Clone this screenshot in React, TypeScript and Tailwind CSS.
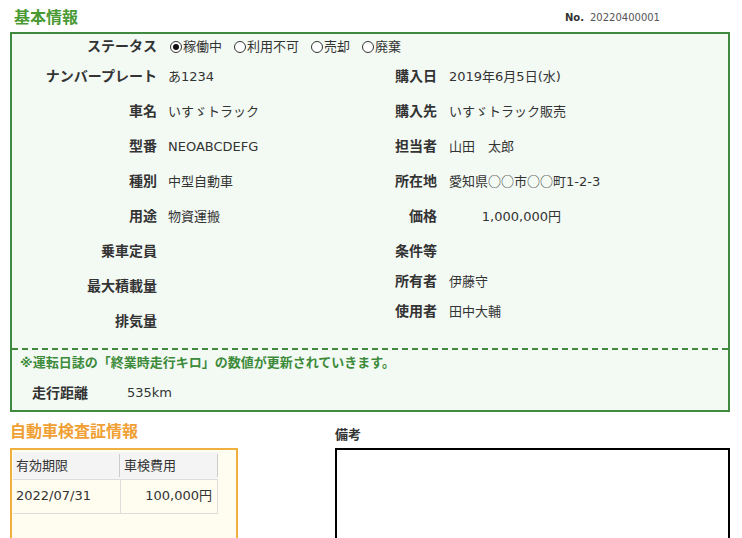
import React from "react";

function Radio({ checked, label }: { checked?: boolean; label: string }) {
  return (
    <span className="flex items-center mr-[12px]">
      <span className="w-[12px] h-[12px] rounded-full border border-[#333] bg-white flex items-center justify-center mr-[1px]">
        {checked && <span className="w-[6px] h-[6px] rounded-full bg-[#111]" />}
      </span>
      <span>{label}</span>
    </span>
  );
}

function LRow({ label, value, h = "h-[35px]" }: { label: string; value?: React.ReactNode; h?: string }) {
  return (
    <div className={`flex items-center ${h}`}>
      <div className="w-[145px] text-right font-bold text-[14px] text-[#333]">{label}</div>
      <div className="ml-[11px] text-[13px] text-[#333]">{value}</div>
    </div>
  );
}

function RRow({ label, value, h = "h-[35px]" }: { label: string; value?: React.ReactNode; h?: string }) {
  return (
    <div className={`flex items-center ${h}`}>
      <div className="w-[57px] text-right font-bold text-[14px] text-[#333]">{label}</div>
      <div className="ml-[12px] text-[13px] text-[#333]">{value}</div>
    </div>
  );
}

const cjk = "font-['Noto_Sans_CJK_JP',sans-serif]";

export default function App() {
  return (
    <div className="w-[742px] h-[538px] overflow-hidden bg-white font-['DejaVu_Sans','Noto_Sans_CJK_JP',sans-serif] text-[#333]">
      <div className="flex items-center h-[32px] px-[10px] pt-[3px]">
        <div className="ml-[4px] text-[16px] font-bold text-[#4a9a34]">基本情報</div>
        <div className="ml-auto mr-[72px] flex items-center text-[10px]">
          <span className="font-bold text-[#333]">No.</span>
          <span className="ml-[6px] text-[#555]">20220400001</span>
        </div>
      </div>

      <div className="ml-[10px] w-[720px] border-2 border-[#3f8a3f] bg-[#f3faf4]">
        <div className="flex items-center h-[25px]">
          <div className="w-[145px] text-right font-bold text-[14px]">ステータス</div>
          <div className="ml-[13px] flex items-center text-[13px]">
            <Radio checked label="稼働中" />
            <Radio label="利用不可" />
            <Radio label="売却" />
            <Radio label="廃棄" />
          </div>
        </div>
        <div className="flex pb-[9px]">
          <div className="w-[368px]">
            <LRow label="ナンバープレート" value="あ1234" />
            <LRow label="車名" value="いすゞトラック" />
            <LRow label="型番" value="NEOABCDEFG" />
            <LRow label="種別" value="中型自動車" />
            <LRow label="用途" value="物資運搬" />
            <LRow label="乗車定員" />
            <LRow label="最大積載量" />
            <LRow label="排気量" />
          </div>
          <div className="flex-1">
            <RRow label="購入日" value="2019年6月5日(水)" />
            <RRow label="購入先" value="いすゞトラック販売" />
            <RRow label="担当者" value="山田　太郎" />
            <RRow
              label="所在地"
              value={<span>愛知県<span className={cjk}>○○</span>市<span className={cjk}>○○</span>町1-2-3</span>}
            />
            <RRow label="価格" value={<span className="inline-block w-[112px] text-right">1,000,000円</span>} />
            <RRow label="条件等" />
            <RRow label="所有者" value="伊藤守" h="h-[25px]" />
            <RRow label="使用者" value="田中大輔" h="h-[35px]" />
          </div>
        </div>
        <div className="border-t-2 border-dashed border-[#3f8a3f]" />
        <div className="h-[26px] flex items-center pl-[8px] text-[13px] font-bold text-[#3d8b3a]">
          ※運転日誌の「終業時走行キロ」の数値が更新されていきます。
        </div>
        <div className="h-[34px] flex items-center pl-[20px]">
          <span className="font-bold text-[14px] w-[95px]">走行距離</span>
          <span className="text-[13px]">535km</span>
        </div>
      </div>

      <div className="flex px-[10px] mt-[8px]">
        <div className="w-[228px]">
          <div className="h-[24px] flex items-center text-[16px] font-bold text-[#f0a032]">自動車検査証情報</div>
          <div className="mt-[4px] h-[150px] border-2 border-[#f0b040] bg-[#fffcf0] pl-[1px] pt-[2px]">
            <table className="w-[205px] border-collapse text-[13px]">
              <tbody>
                <tr className="h-[27px] bg-[#f4f4f4]">
                  <td className="w-[107px] pl-[3px] border-b border-[#dddddd] relative">
                    有効期限
                    <span className="absolute right-0 top-[2px] bottom-[2px] w-px bg-[#cccccc]" />
                  </td>
                  <td className="pl-[4px] border-b border-[#dddddd] relative">
                    車検費用
                    <span className="absolute right-0 top-[2px] bottom-[2px] w-px bg-[#cccccc]" />
                  </td>
                </tr>
                <tr className="h-[34px]">
                  <td className="pl-[3px] border-b border-r border-[#dddddd]">2022/07/31</td>
                  <td className="pr-[5px] text-right border-b border-r border-[#dddddd]">100,000円</td>
                </tr>
              </tbody>
            </table>
          </div>
        </div>
        <div className="ml-[97px] w-[395px]">
          <div className="h-[24px] pt-[5px] flex items-center text-[13px] font-bold text-[#333]">備考</div>
          <div className="mt-[4px] h-[150px] border-2 border-black bg-white" />
        </div>
      </div>
    </div>
  );
}
